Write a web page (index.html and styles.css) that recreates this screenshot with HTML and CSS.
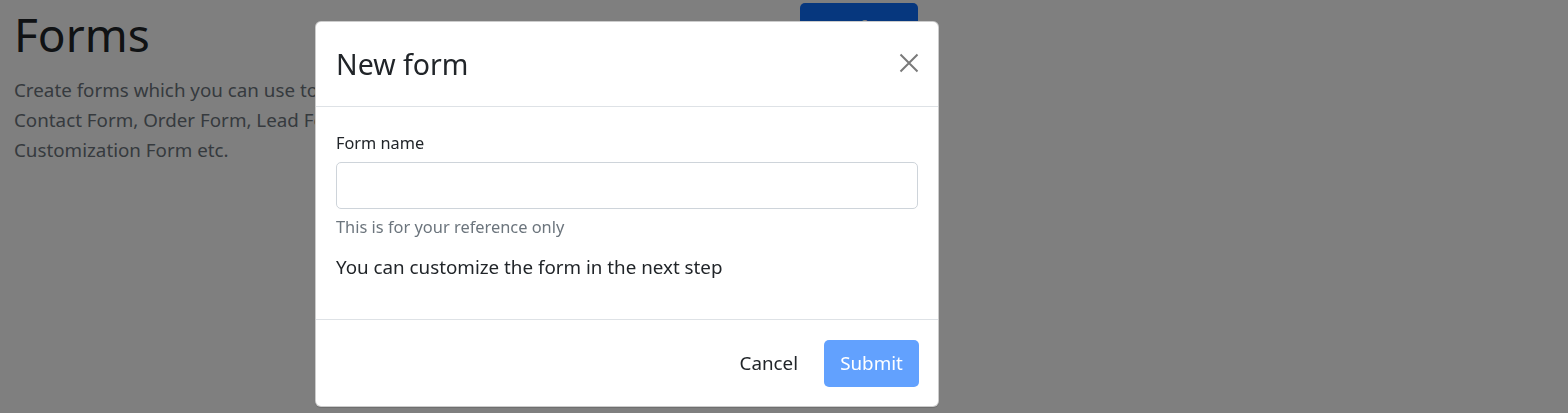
FILE: index.html
```html
<!DOCTYPE html>
<html lang="en">
<head>
<meta charset="utf-8">
<title>Forms</title>
<link rel="stylesheet" href="styles.css">
</head>
<body>
<div class="page">
  <div class="intro">
    <h1 class="page-title">Forms</h1>
    <p class="lead">Create forms which you can use to collect data<br>Contact Form, Order Form, Lead Form<br>Customization Form etc.</p>
  </div>
  <button class="btn btn-new" type="button">New form</button>
</div>

<div class="backdrop"></div>

<div class="modal" role="dialog" aria-labelledby="modal-title">
  <div class="modal-header">
    <h3 class="modal-title" id="modal-title">New form</h3>
    <button class="btn-close" type="button" aria-label="Close">
      <svg viewBox="0 0 20 20" width="20" height="20" aria-hidden="true"><path d="M1.5 1.5L18.5 18.5M18.5 1.5L1.5 18.5" stroke="currentColor" stroke-width="2" fill="none"/></svg>
    </button>
  </div>
  <div class="modal-body">
    <label class="form-label" for="form-name">Form name</label>
    <input class="form-control" id="form-name" type="text">
    <div class="form-text">This is for your reference only</div>
    <p class="note">You can customize the form in the next step</p>
  </div>
  <div class="modal-footer">
    <button class="btn btn-cancel" type="button">Cancel</button>
    <button class="btn btn-submit" type="button" disabled>Submit</button>
  </div>
</div>
</body>
</html>
```

FILE: styles.css
```css
* { box-sizing: border-box; }

body {
  margin: 0;
  background: #fff;
  color: #212529;
  font-family: "Noto Sans", "Open Sans", sans-serif;
  font-size: 18.8px;
  line-height: 1.5;
}

.page {
  display: flex;
  justify-content: space-between;
  align-items: flex-start;
  width: 918px;
  padding-left: 14px;
  padding-top: 3px;
}

.page-title {
  margin: 4px 0 13px;
  font-size: 46px;
  font-weight: 400;
  line-height: 1.2;
}

.lead {
  margin: 0;
  color: #6c757d;
  font-size: 18.8px;
  line-height: 30px;
}

.backdrop {
  position: fixed;
  inset: 0;
  background: rgba(0, 0, 0, 0.5);
}

.modal {
  position: fixed;
  left: 315px;
  top: 21px;
  width: 624px;
  background: #fff;
  border: 1px solid rgba(0, 0, 0, 0.2);
  border-radius: 6px;
  box-shadow: 0 1px 1px rgba(0, 0, 0, 0.15);
}

.modal-header {
  display: flex;
  align-items: center;
  justify-content: space-between;
  height: 85px;
  padding: 0 19px 0 20px;
  border-bottom: 1px solid #dee2e6;
}

.modal-title {
  margin: 0;
  font-size: 28.5px;
  font-weight: 400;
  line-height: 1.2;
}

.btn-close {
  display: flex;
  margin-top: -3px;
  padding: 0;
  border: 0;
  background: transparent;
  color: #7a7a7a;
}

.modal-body {
  height: 212px;
  padding: 20px;
}

.form-label {
  display: block;
  padding-top: 3px;
  margin-bottom: 6px;
  font-size: 16.3px;
  line-height: 26px;
}

.form-control {
  display: block;
  width: 100%;
  height: 47px;
  padding: 7px 15px;
  border: 1px solid #ced4da;
  border-radius: 5px;
  font: inherit;
}

.form-text {
  margin-top: 5px;
  color: #6c757d;
  font-size: 16.4px;
  line-height: 26px;
}

.note {
  margin: 12px 0 0;
  line-height: 30px;
}

.modal-footer {
  display: flex;
  justify-content: flex-end;
  align-items: center;
  gap: 10px;
  height: 87px;
  padding: 0 19px 0 20px;
  border-top: 1px solid #dee2e6;
}

.btn {
  height: 47px;
  padding: 0 15px;
  border: 1px solid transparent;
  border-radius: 5px;
  font: inherit;
  line-height: 30px;
  white-space: nowrap;
}

.btn-new {
  width: 118px;
  padding: 0;
  background: #0d6efd;
  color: #fff;
}

.btn-cancel {
  background: transparent;
  color: #212529;
}

.btn-submit {
  width: 95px;
  background: #62a1fe;
  color: #fff;
}
```
